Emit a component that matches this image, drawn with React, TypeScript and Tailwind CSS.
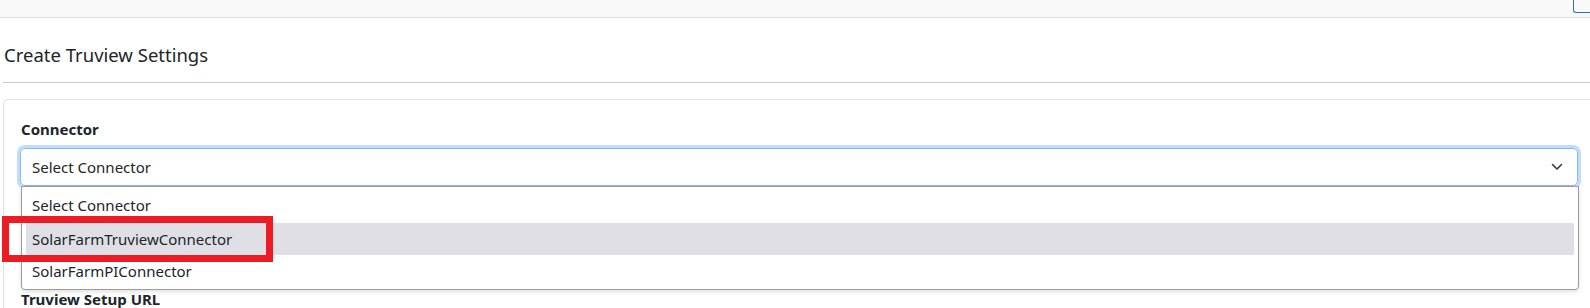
import React from "react";

export default function App() {
  const font = { fontFamily: '"Noto Sans", "Open Sans", sans-serif' };
  return (
    <div className="relative h-[308px] w-[1590px] overflow-hidden bg-white text-[#212529]" style={font}>
      {/* top nav */}
      <div className="flex h-[18px] w-[1610px] justify-end border-b border-[#dedede] bg-[#f9f9f9]">
        <div className="h-[13px] w-[37px] rounded-bl-[3px] border-b border-l border-[#2f6fbf]" />
      </div>

      <div className="w-[1610px] pl-[3px]">
        {/* header */}
        <div className="border-b border-[#c8c8c8] pb-[14px] pt-[24px]">
          <h4 className="pl-[1px] text-[18.5px] font-normal leading-[26px] text-[#212529]">Create Truview Settings</h4>
        </div>

        {/* card */}
        <div className="mt-[16px] h-[300px] w-[1592px] rounded-[5px] border border-[#e0e0e0] px-[16px] pt-[19px]">
          <label className="block pl-[1px] text-[15px] font-bold leading-[20px] text-[#212529]">Connector</label>
          <div className="relative mt-[9px]">
            <div className="flex h-[38px] items-center justify-between rounded-[5px] border border-[#86b7fe] px-[11px] shadow-[0_0_0_3px_#c2dbfe]">
              <span className="text-[15px] leading-[20px] text-[#212529]">Select Connector</span>
              <svg width="12" height="8" viewBox="0 0 12 8" className="mr-[3px]">
                <path d="M1.5 1.5 L6 6 L10.5 1.5" fill="none" stroke="#343a40" strokeWidth="1.6" strokeLinecap="round" strokeLinejoin="round" />
              </svg>
            </div>
            {/* dropdown list */}
            <div className="absolute left-[1px] right-[-1px] top-[38px] z-10 flex flex-col rounded-b-[4px] border border-[#9b9b9b] bg-white px-[4px] pb-[1px] pt-[1px] shadow-[0_2px_4px_rgba(0,0,0,0.12)]">
              <div className="flex h-[35px] items-center px-[6px] text-[15px] text-[#212529]">Select Connector</div>
              <div className="flex h-[32px] items-center rounded-[2px] bg-[#e0dfe5] px-[6px] text-[15px] text-[#212529]">SolarFarmTruviewConnector</div>
              <div className="flex h-[33px] items-center px-[6px] text-[15px] text-[#212529]">SolarFarmPIConnector</div>
            </div>
          </div>
          <label className="mt-[103px] block pl-[1px] text-[15px] font-bold leading-[20px] text-[#212529]">Truview Setup URL</label>
        </div>
      </div>

      {/* red annotation */}
      <div className="absolute left-[2px] top-[216px] z-20 h-[46px] w-[271px] border-[7px] border-[#ed1c24]" />
    </div>
  );
}
